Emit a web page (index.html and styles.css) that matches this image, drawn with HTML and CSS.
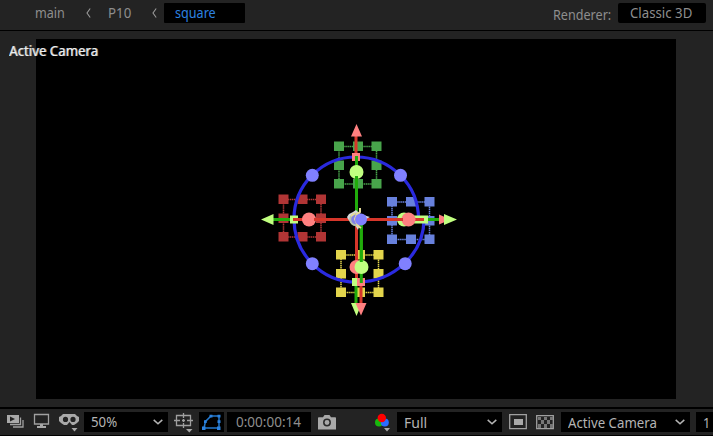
FILE: index.html
```html
<!DOCTYPE html>
<html lang="en">
<head>
<meta charset="utf-8">
<title>Composition viewer</title>
<link rel="stylesheet" href="styles.css">
</head>
<body>
<header class="topbar">
  <nav class="crumbs">
    <span class="crumb crumb-main"><span class="label">main</span></span>
    <svg class="sep" width="5" height="10" viewBox="0 0 5 10"><path d="M4.200.5 1 5l3.200 4.500"/></svg>
    <span class="crumb crumb-p"><span class="label">P10</span></span>
    <svg class="sep" width="5" height="10" viewBox="0 0 5 10"><path d="M4.200.5 1 5l3.200 4.500"/></svg>
    <span class="crumb crumb-active"><span class="label">square</span></span>
  </nav>
  <div class="renderer">
    <span class="renderer-name"><span class="label">Renderer:</span></span>
    <span class="renderer-value"><span class="label wide">Classic 3D</span></span>
  </div>
</header>

<main class="viewer">
  <svg class="canvas" width="640" height="360" viewBox="36 39 640 360">
    <defs>
      <g id="handles">
        <path class="dots" d="M0 0H37.500V37.500H0Z"/>
        <path d="M-5-5h10v9.500h-10zM14-5h10v9.500h-10zM32.500-5h10v9.500h-10zM-5 14h10v9.500h-10zM32.500 14h10v9.500h-10zM-5 32.500h10V42h-10zM14 32.500h10V42h-10zM32.500 32.500h10V42h-10z"/>
      </g>
    </defs>
    <use href="#handles" class="green" x="339" y="146.500"/>
    <use href="#handles" class="red" x="283.500" y="199.500"/>
    <use href="#handles" class="blue" x="392" y="202"/>
    <use href="#handles" class="yellow" x="341" y="255"/>

    <g class="ring">
      <path d="M356 282A62 63 0 0 1 294 219A62 62 0 0 1 356 157A62.500 62 0 0 1 418.500 219"/>
      <path d="M356 282A67 63 0 0 0 424 219"/>
    </g>

    <g class="axis-red">
      <path d="M356 134V157M356.500 219.500V282M361 282V304M418 219.500H441"/>
    </g>
    <g class="axis-green"><path d="M272 219.500H294M424 219.500H446M356 282V304"/></g>
    <path class="pink" d="M356.500 124L362 136.500H351ZM450.500 219.500L439 214.500V224.500Z"/>
    <path class="lime" d="M261 219.500L273.500 214V225ZM457 219.500L444 214V225ZM356.500 316L351 303H362Z"/>
    <path class="pink" d="M361 315.500L355.500 303H366.500Z"/>
    <path class="pink" d="M352 153h8v8h-8z"/>
    <path class="lime" d="M290 215.500h8v8h-8zM414 215.500h8v8h-8zM420 215.500h8v8h-8zM352 278h8v8h-8z"/>
    <path class="pink" d="M357 278h8v8h-8z"/>

    <path class="axis-red" d="M293 219.500H424"/>
    <path class="axis-green" d="M356.500 156V219M361.300 219V283"/>
    <g class="lime"><circle cx="356.500" cy="172" r="7"/><circle cx="404" cy="219.500" r="7"/></g>
    <g class="pink"><circle cx="309" cy="219.500" r="7"/><circle cx="408.500" cy="219.500" r="7"/><circle cx="356.500" cy="267" r="7"/></g>
    <circle class="lime" cx="361.500" cy="267" r="7"/>
    <path class="axis-red" d="M314 219.500H403"/>
    <path class="axis-green" d="M356.500 176V219M361.300 219V262"/>
    <g class="violet"><circle cx="312.300" cy="175.300" r="6.500"/><circle cx="400.500" cy="175.300" r="6.500"/><circle cx="312.300" cy="263.700" r="6.500"/><circle cx="405.200" cy="263.700" r="6.500"/></g>

    <path class="star" d="M356 210l3 3 4 2 7 2-6 3-4 4-2 6-3-5-4-2-3-4-1-2 2-3 4-2z"/>
    <circle class="star-ring" cx="356" cy="219.500" r="5.800"/>
    <path class="star-gold" d="M360 208v4l-3 2-2 5 3 7 3 2M351 216l4-3"/>
    <circle class="violet" cx="361" cy="219.500" r="6"/>
  </svg>
  <div class="view-name"><span class="label wide">Active Camera</span></div>
</main>

<footer class="toolbar">
  <svg class="tool tool-preview" width="18" height="26" viewBox="0 0 18 26">
    <path class="fill" fill-rule="evenodd" d="M1 6h12v8H1zM4 7.500v5l5-2.500z"/>
    <path class="line" d="M4 15.500h10.500V8.500M7 18h10V11"/>
  </svg>
  <svg class="tool tool-monitor" width="17" height="26" viewBox="0 0 17 26">
    <path class="line" d="M1.500 5.500h14v9.500h-14z"/><path class="fill" d="M7 15h3v2h3v2H4v-2h3z"/>
  </svg>
  <svg class="tool tool-mask" width="21" height="26" viewBox="0 0 21 26">
    <path class="fill" fill-rule="evenodd" d="M4 5h12l2 2 2 1v4l-2 2-3 2h-2l-2.500-3L8 16H5l-3-2-2-2V8l2-1zM6.500 7.800a2.600 2.600 0 1 0 0 5.200 2.600 2.600 0 0 0 0-5.200zM14 7.800a2.600 2.600 0 1 0 0 5.200 2.600 2.600 0 0 0 0-5.200z"/>
    <path class="fill" d="M12.500 19h6l-3 3.500z"/>
  </svg>
  <div class="field field-zoom"><span class="label wide">50%</span><svg class="chev" width="10" height="6" viewBox="0 0 10 6"><path d="M.7.9 5 4.700 9.300.9"/></svg></div>
  <svg class="tool tool-grid" width="19" height="26" viewBox="0 0 19 26">
    <path class="line" d="M2.500 6.500h14v10h-14zM9.500 4v5M9.500 14v5M0 11.500h6M13 11.500h6M8 11.500h3M9.500 10v3"/>
    <path class="fill" d="M12 20h6.500l-3.200 3.500z"/>
  </svg>
  <div class="toggle"><svg width="19" height="16" viewBox="0 0 19 16">
    <path class="shape" d="M2 14 3.500 7.500 9 2H17V14Z"/>
    <path class="knots" d="M0 12.500h3.500V16H0zM2 6.300h2.700v2.700H2zM7.500.7h3v2.700h-3zM15.500.7h3v2.700h-3zM15.500 6.300h3v2.700h-3zM15 12.500h3.500V16H15z"/>
  </svg></div>
  <div class="field field-time"><span class="label time">0:00:00:14</span></div>
  <svg class="tool tool-camera" width="18" height="26" viewBox="0 0 18 26">
    <path class="fill" d="M0 9q0-.8.800-.8H5L6.500 6h5L13 8.200h4.200q.8 0 .8.800v11.500H0z"/><circle class="lens" cx="9" cy="13.500" r="3.200"/>
  </svg>
  <svg class="tool tool-rgb" width="15" height="26" viewBox="0 0 15 26">
    <circle class="ch-g" cx="4" cy="13.500" r="4"/><circle class="ch-b" cx="9.800" cy="13.500" r="4"/><circle class="ch-r" cx="6.800" cy="9" r="4.200"/><path class="fill" d="M9 19h6l-3 3.500z"/>
  </svg>
  <div class="field field-quality"><span class="label full">Full</span><svg class="chev" width="10" height="6" viewBox="0 0 10 6"><path d="M.7.9 5 4.700 9.300.9"/></svg></div>
  <svg class="tool tool-region" width="18" height="26" viewBox="0 0 18 26">
    <path class="line" d="M.7 5.700h16.600v14H.7z"/><path class="fill" d="M5 10h9v6H5z"/>
  </svg>
  <svg class="tool tool-checker" width="18" height="26" viewBox="0 0 18 26">
    <path class="line" d="M.7 6.700h16.600v13H.7z"/>
    <path class="check" d="M2 8h3v3H2zM8 8h3v3H8zM14 8h3v3h-3zM5 11h3v4H5zM11 11h3v4h-3zM2 15h3v4H2zM8 15h3v4H8zM14 15h3v4h-3z"/>
  </svg>
  <div class="field field-view"><span class="label wide">Active Camera</span><svg class="chev" width="10" height="6" viewBox="0 0 10 6"><path d="M.7.9 5 4.700 9.300.9"/></svg></div>
  <div class="field field-count"><span class="label">1</span></div>
</footer>
</body>
</html>
```

FILE: styles.css
```css
* { box-sizing: border-box; }

body {
  margin: 0;
  width: 713px;
  height: 436px;
  overflow: hidden;
  background: #232323;
  color: #8e8e8e;
  font: 14px/20px "Noto Sans", "Open Sans", sans-serif;
}

svg { display: block; flex: none; }

.label {
  display: inline-block;
  white-space: nowrap;
  transform: scaleX(.9);
  transform-origin: 0 50%;
}
.label.wide { transform: scaleX(.945); }
.label.time { transform: scaleX(.965); }
.label.full { transform: scaleX(1); }

/* Header */
.topbar {
  display: flex;
  justify-content: space-between;
  height: 31px;
  padding: 3px 7px 0 35px;
  border-bottom: 1px solid #000;
}
.crumbs, .renderer { display: flex; height: 20px; }
.crumb-main { width: 51px; }
.crumb-p { width: 44px; margin-left: 17px; }
.crumb-p .label { transform: scaleX(.95); }
.crumb-active {
  width: 81px;
  margin-left: 7px;
  padding-left: 11px;
  border-radius: 1px;
  background: #000;
  color: #2d83e0;
}
.sep { margin-top: 5px; }
.sep path { fill: none; stroke: #999; stroke-width: 1.1; }
.renderer-name { width: 65px; padding-top: 2px; }
.renderer-value {
  width: 88px;
  padding-left: 12px;
  border-radius: 2px;
  background: #000;
}

/* Viewer */
.viewer {
  position: relative;
  height: 376px;
  padding: 8px 37px 8px 36px;
}
.canvas { background: #000; }
.view-name {
  position: absolute;
  left: 9px;
  top: 10px;
  color: #eee;
  text-shadow: 1px 0 0 #999;
}

.dots { fill: none; stroke: currentColor; stroke-width: 1.5; stroke-dasharray: 1.5 .6; }
.green { color: #48a44b; fill: #48a44b; }
.red { color: #b13535; fill: #b13535; }
.blue { color: #6881dd; fill: #6881dd; }
.yellow { color: #e3d54c; fill: #e3d54c; }
.ring { fill: none; stroke: #2a2adf; stroke-width: 3.2; }
.axis-red { fill: none; stroke: #d6362a; stroke-width: 3; }
.axis-green { fill: none; stroke: #20ac0b; stroke-width: 3; }
.pink { fill: #ff8080; }
.lime { fill: #c1ff80; }
.violet { fill: #8080ff; }
.star { fill: #d8dbe0; }
.star-ring { fill: #8080e8; stroke: #b7c5ad; stroke-width: 2; }
.star-gold { fill: none; stroke: #e5da98; stroke-width: 2; }

/* Toolbar */
.toolbar {
  display: flex;
  height: 29px;
  border-top: 2px solid #000;
  border-bottom: 1px solid #000;
}
.fill { fill: #a9a9a9; }
.line { fill: none; stroke: #a0a0a0; stroke-width: 1.3; }
.lens { fill: #a9a9a9; stroke: #292929; stroke-width: 1.5; }
.check { fill: #777; }
.ch-r { fill: #f00; }
.ch-g { fill: #18b80d; }
.ch-b { fill: #2c6cff; }

.tool-preview { margin-left: 6px; }
.tool-monitor { margin-left: 9px; }
.tool-mask { margin-left: 9px; }
.tool-grid { margin-left: 6px; }
.tool-camera { margin-left: 7px; }
.tool-rgb { margin-left: 39px; }
.tool-region { margin-left: 7px; }
.tool-checker { margin-left: 9px; }

.field {
  display: flex;
  flex: none;
  justify-content: space-between;
  height: 20px;
  margin-top: 3px;
  background: #000;
  color: #b4b4b4;
}
.chev { margin: 7px 5px 0 0; }
.chev path { fill: none; stroke: #b4b4b4; stroke-width: 1.5; }
.field-zoom { width: 84px; margin-left: 4px; padding-left: 7px; }
.field-time { width: 84px; margin-left: 3px; padding-left: 9px; color: #8e8e8e; }
.field-quality { width: 105px; margin-left: 7px; padding-left: 7px; }
.field-view { width: 129px; margin-left: 7px; padding-left: 7px; }
.field-count { width: 17px; margin-left: 6px; padding-left: 7px; }
.field-quality .label, .field-view .label, .field-count .label { padding-top: 1px; }

.toggle {
  flex: none;
  width: 25px;
  height: 20px;
  margin: 3px 0 0 6px;
  padding: 2px 3px;
  background: #000;
}
.shape { fill: none; stroke: #2478cc; stroke-width: 1.5; }
.knots { fill: #2d83e0; }
```
